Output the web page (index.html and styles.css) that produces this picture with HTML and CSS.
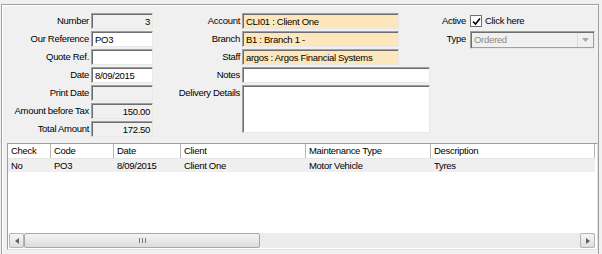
FILE: index.html
```html
<!DOCTYPE html>
<html lang="en">
<head>
  <meta charset="UTF-8" />
  <title>Purchase Order</title>
  <link rel="stylesheet" href="styles.css">
</head>
<body>
  <div class="frame">
    <div class="form">
      <div class="col col-left">
        <div class="row"><label>Number</label><span class="box ro num">3</span></div>
        <div class="row"><label>Our Reference</label><span class="box">PO3</span></div>
        <div class="row"><label>Quote Ref.</label><span class="box"></span></div>
        <div class="row"><label>Date</label><span class="box">8/09/2015</span></div>
        <div class="row"><label>Print Date</label><span class="box ro"></span></div>
        <div class="row"><label>Amount before Tax</label><span class="box ro num">150.00</span></div>
        <div class="row"><label>Total Amount</label><span class="box ro num">172.50</span></div>
      </div>

      <div class="col col-mid">
        <div class="row"><label>Account</label><span class="box lookup">CLI01 : Client One</span></div>
        <div class="row"><label>Branch</label><span class="box lookup">B1 : Branch 1 -</span></div>
        <div class="row"><label>Staff</label><span class="box lookup">argos : Argos Financial Systems</span></div>
        <div class="row"><label>Notes</label><span class="box wide"></span></div>
        <div class="row tall"><label>Delivery Details</label><span class="box wide memo"></span></div>
      </div>

      <div class="col col-right">
        <div class="row">
          <label>Active</label>
          <span class="check">
            <svg width="9" height="9" viewBox="0 0 9 9"><path d="M1 4.5 L3.5 7 L8 1.5" fill="none" stroke="#000" stroke-width="1.6"/></svg>
          </span>
          <span class="check-text">Click here</span>
        </div>
        <div class="row">
          <label>Type</label>
          <span class="select">
            <span class="select-text">Ordered</span>
            <span class="select-btn">
              <svg width="7" height="4" viewBox="0 0 7 4"><path d="M0 0 H7 L3.5 4 Z" fill="#a7a7a7"/></svg>
            </span>
          </span>
        </div>
      </div>
    </div>

    <div class="grid">
      <div class="grid-head">
        <div class="c c1">Check</div>
        <div class="c c2">Code</div>
        <div class="c c3">Date</div>
        <div class="c c4">Client</div>
        <div class="c c5">Maintenance Type</div>
        <div class="c c6">Description</div>
      </div>
      <div class="grid-row">
        <div class="c c1">No</div>
        <div class="c c2">PO3</div>
        <div class="c c3">8/09/2015</div>
        <div class="c c4">Client One</div>
        <div class="c c5">Motor Vehicle</div>
        <div class="c c6">Tyres</div>
      </div>
      <div class="grid-body"></div>
      <div class="hscroll">
        <span class="sbtn">
          <svg width="4" height="6" viewBox="0 0 4 6"><path d="M4 0 V6 L0 3 Z" fill="#606060"/></svg>
        </span>
        <span class="track">
          <span class="thumb">
            <svg width="7" height="5" viewBox="0 0 7 5"><path d="M0.5 0 V5 M3.5 0 V5 M6.5 0 V5" stroke="#777" stroke-width="1"/></svg>
          </span>
        </span>
        <span class="sbtn">
          <svg width="4" height="6" viewBox="0 0 4 6"><path d="M0 0 V6 L4 3 Z" fill="#606060"/></svg>
        </span>
      </div>
    </div>
  </div>
</body>
</html>
```

FILE: styles.css
```css
body {
  margin: 0;
  padding: 0;
  background: #f0f0f0;
  font-family: "Liberation Sans", Arial, sans-serif;
  font-size: 9.5px;
  letter-spacing: -0.3px;
  color: #000;
  width: 602px;
  height: 254px;
  overflow: hidden;
}

.frame {
  margin: 4px 0 0 1px;
  width: 598px;
  height: 260px;
  border: 1px solid #a0a0a0;
  box-shadow: inset 1px 1px 0 #fff;
  box-sizing: border-box;
}

.form {
  display: flex;
  padding-top: 8px;
  height: 138px;
  box-sizing: border-box;
}

.col {
  display: flex;
  flex-direction: column;
  gap: 2px;
}

.row {
  display: flex;
  align-items: flex-start;
  height: 16px;
}

.row label {
  text-align: right;
  padding-right: 2px;
  line-height: 15px;
  white-space: nowrap;
}

.col-left label { width: 87px; }
.col-mid label { width: 64px; }
.col-right label { width: 30px; padding-right: 4px; }

.col-mid { margin-left: 23px; }
.col-right { margin-left: 6px; }

.box {
  display: block;
  height: 16px;
  width: 62px;
  box-sizing: border-box;
  background: #fff;
  border: 1px solid;
  border-color: #a0a0a0 #e8e8e8 #e8e8e8 #a0a0a0;
  box-shadow: inset 1px 1px 0 #6e6e6e;
  padding: 1px 2px 0 3px;
  line-height: 14px;
  white-space: nowrap;
  overflow: hidden;
}

.box.ro { background: #f0f0f0; }
.box.num { text-align: right; }

.box.lookup {
  width: 157px;
  background: #fde6bb;
}

.box.wide { width: 188px; }

.row.tall { height: 48px; }
.box.memo { height: 48px; }

.check {
  display: flex;
  align-items: center;
  justify-content: center;
  width: 12px;
  height: 12px;
  margin: 2px 3px 0 0;
  box-sizing: border-box;
  background: #fff;
  border: 1px solid #6f6f6f;
}

.check-text { line-height: 15px; }

.select {
  display: flex;
  width: 125px;
  height: 18px;
  box-sizing: border-box;
  background: #f0f0f0;
  border: 1px solid;
  border-color: #a0a0a0 #e8e8e8 #e8e8e8 #a0a0a0;
  box-shadow: inset 1px 1px 0 #6e6e6e, inset -1px -1px 0 #a0a0a0;
}

.select-text {
  flex: 1;
  color: #8a8a8a;
  padding: 2px 0 0 3px;
}

.select-btn {
  display: flex;
  align-items: center;
  justify-content: center;
  width: 15px;
  margin: 1px 1px 1px 0;
  border-left: 1px solid #dcdcdc;
}

.grid {
  margin-left: 5px;
  width: 591px;
  height: 107px;
  box-sizing: border-box;
  background: #fff;
  border: 1px solid #a0a0a0;
  border-bottom-color: #e0e0e0;
  border-right-color: #e0e0e0;
  display: flex;
  flex-direction: column;
}

.grid-head,
.grid-row {
  display: flex;
  width: 587px;
}

.grid-head {
  height: 14px;
  line-height: 14px;
  border-bottom: 1px solid #e5e5e5;
}

.grid-head .c { border-right: 1px solid #b6b6b6; }

.grid-row {
  height: 13px;
  line-height: 13px;
  background: #efefef;
}

.c {
  padding-left: 3px;
  box-sizing: border-box;
  white-space: nowrap;
  overflow: hidden;
}

.c1 { width: 43px; }
.c2 { width: 63px; }
.c3 { width: 67px; }
.c4 { width: 125px; }
.c5 { width: 125px; }
.c6 { width: 164px; }

.grid-body { flex: 1; }

.hscroll {
  display: flex;
  height: 15px;
  margin: 0 2px 1px 1px;
  background: #eaeaea;
}

.sbtn {
  display: flex;
  align-items: center;
  justify-content: center;
  width: 15px;
  box-sizing: border-box;
  background: linear-gradient(#f6f6f6, #dedede);
  border: 1px solid #b4b4b4;
  border-radius: 2px;
}

.track {
  flex: 1;
  display: flex;
  background: #ececec;
}

.thumb {
  display: flex;
  align-items: center;
  justify-content: center;
  width: 236px;
  box-sizing: border-box;
  background: linear-gradient(#f4f4f4, #dcdcdc);
  border: 1px solid #a8a8a8;
  border-radius: 2px;
}
```
